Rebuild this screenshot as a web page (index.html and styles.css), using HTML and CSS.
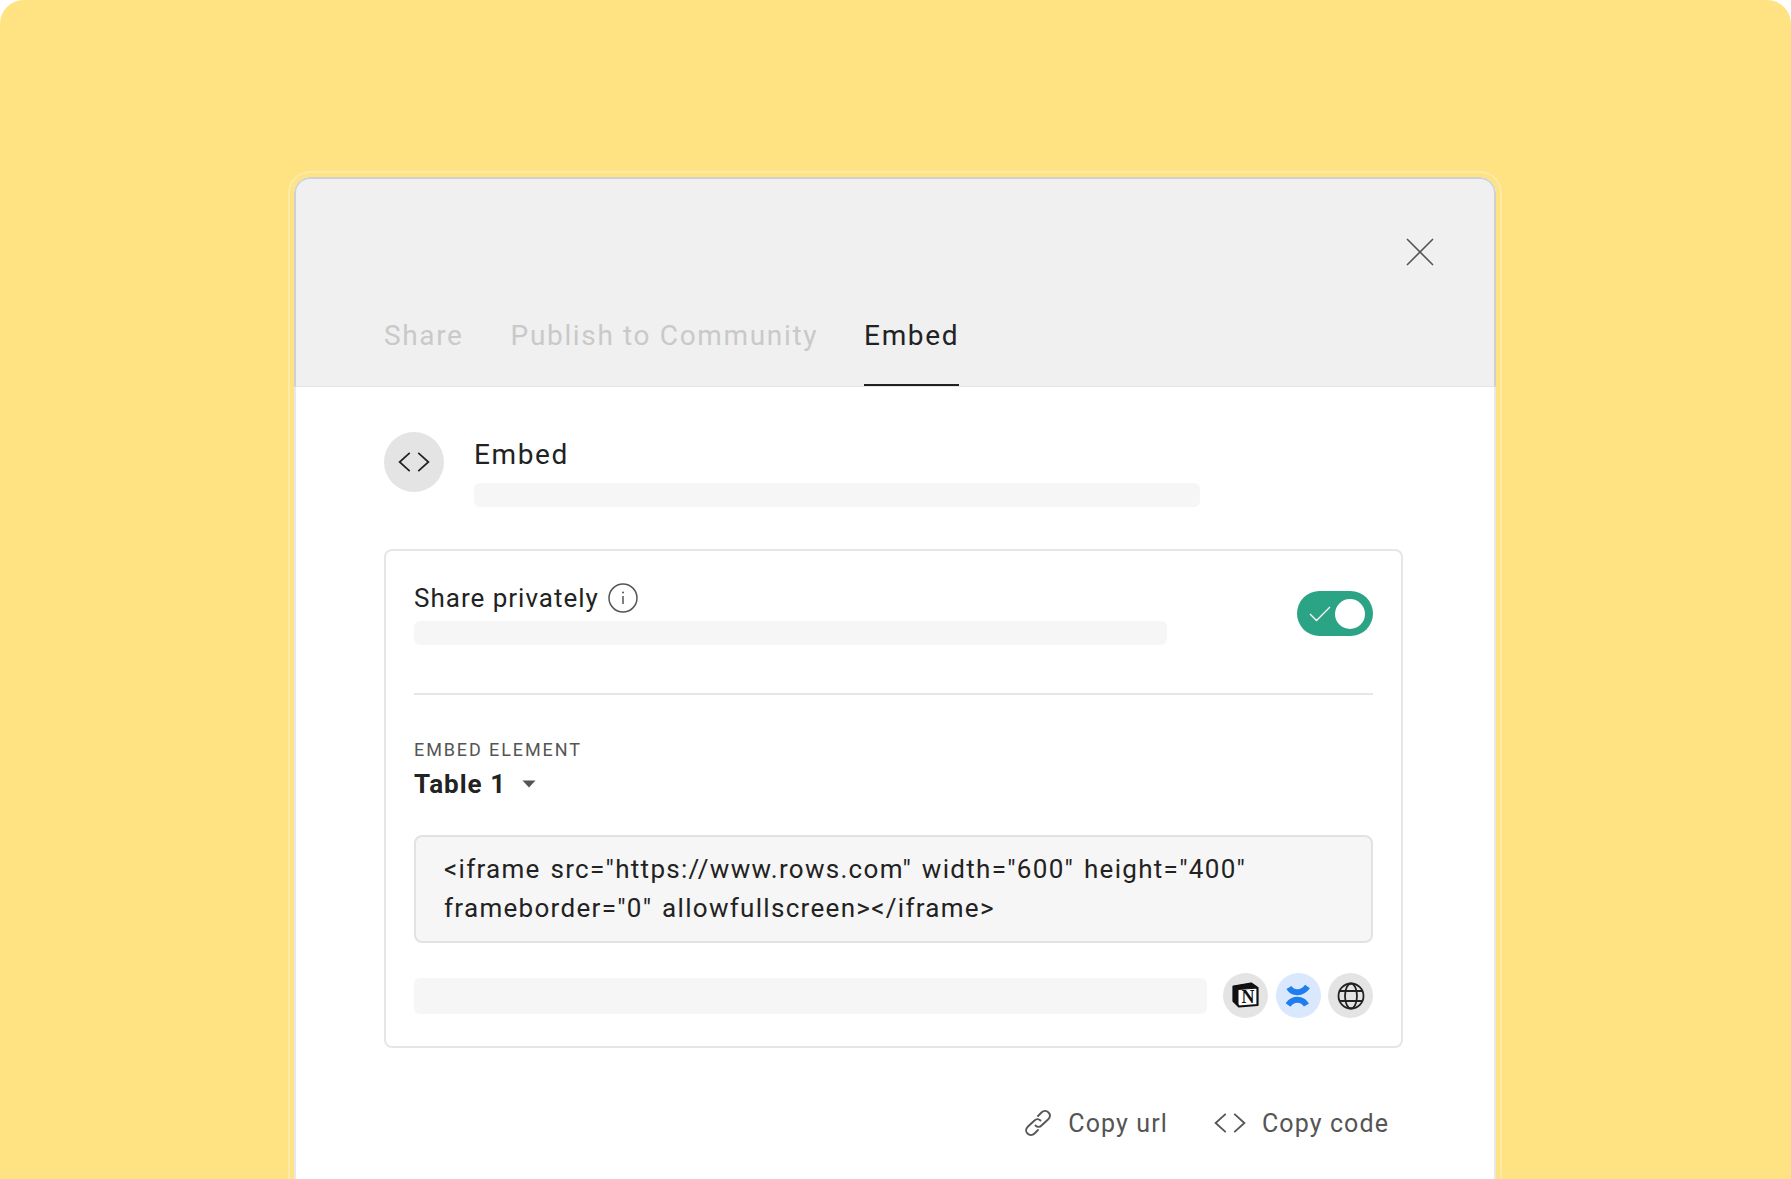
FILE: index.html
```html
<!DOCTYPE html>
<html lang="en">
<head>
<meta charset="utf-8">
<title>Embed</title>
<link rel="stylesheet" href="styles.css">
</head>
<body>
<main class="page">
  <section class="dialog">
    <header class="head">
      <button class="close" aria-label="Close">
        <svg width="28" height="28" viewBox="0 0 28 28"><path d="M1 1L27 27M27 1L1 27" fill="none" stroke="#555" stroke-width="1.6"/></svg>
      </button>
      <nav class="tabs">
        <span class="tab">Share</span>
        <span class="tab">Publish to Community</span>
        <span class="tab active">Embed</span>
      </nav>
    </header>
    <div class="body">
      <div class="intro">
        <span class="round">
          <svg width="32" height="22" viewBox="0 0 30 20"><path d="M11 1.5L1.5 10L11 18.500M19 1.500L28.500 10L19 18.500" fill="none" stroke="#222" stroke-width="1.600"/></svg>
        </span>
        <div class="intro-text">
          <h2 class="title">Embed</h2>
          <div class="ph ph-intro"></div>
        </div>
      </div>
      <div class="panel">
        <div class="private">
          <div class="private-text">
            <div class="label-row">
              <span class="label">Share privately</span>
              <svg class="info" width="30" height="30" viewBox="0 0 30 30"><circle cx="15" cy="15" r="14" fill="none" stroke="#555" stroke-width="1.500"/><path d="M15 13V21" stroke="#555" stroke-width="1.500"/><circle cx="15" cy="9.500" r="1" fill="#555"/></svg>
            </div>
            <div class="ph ph-private"></div>
          </div>
          <div class="toggle">
            <svg width="22" height="16" viewBox="0 0 22 16"><path d="M1 8L7.500 14.500L21 1" fill="none" stroke="#fff" stroke-width="1.300"/></svg>
            <span class="knob"></span>
          </div>
        </div>
        <div class="element">
          <div class="eyebrow">EMBED ELEMENT</div>
          <div class="select">
            <span class="select-name">Table 1</span>
            <svg width="14" height="8" viewBox="0 0 14 8"><path d="M0.500 0.500H13.500L7 7.500Z" fill="#555"/></svg>
          </div>
        </div>
        <div class="code">&lt;iframe src="https://www.rows.com" width="600" height="400" frameborder="0" allowfullscreen&gt;&lt;/iframe&gt;</div>
        <div class="targets">
          <div class="ph ph-target"></div>
          <span class="chip">
            <svg width="27" height="27" viewBox="0 0 27 27"><path d="M1.500 4.500L19 1.500L25.500 6V23L7 24.500L1.500 19Z" fill="#fff" stroke="#111" stroke-width="2.200" stroke-linejoin="round"/><path d="M1.500 4.500L6 7.500L25.500 6L19 1.500Z" fill="#111" stroke="#111" stroke-width="1.200" stroke-linejoin="round"/><path d="M1.500 4.500L6.500 8V24L1.500 19Z" fill="#111"/><text x="16" y="21" class="notion-n">N</text></svg>
          </span>
          <span class="chip chip-blue">
            <svg width="24" height="26" viewBox="0 0 24 26"><g fill="none" stroke="#1f7df0" stroke-width="6"><path d="M3 4.500C7 11 16 11 21.500 3.500"/><path d="M2 22C7 15 16 15 20.500 22"/></g></svg>
          </span>
          <span class="chip">
            <svg width="28" height="28" viewBox="0 0 28 28"><g fill="none" stroke="#222" stroke-width="1.800"><circle cx="14" cy="14" r="12.500"/><ellipse cx="14" cy="14" rx="6" ry="12.500"/><path d="M3 9H25M3 19H25"/></g></svg>
          </span>
        </div>
      </div>
      <div class="actions">
        <button class="action">
          <svg width="28" height="28" viewBox="0 0 28 28"><g fill="none" stroke="#555" stroke-width="1.800" stroke-linecap="round"><path d="M11.500 16.500C13.500 18.500 16 18 17.500 16.500L24 10.500C26.500 8 26.500 5.500 24.500 3.500C22.500 1.500 19.500 1.500 17.500 3.500L14 7"/><path d="M16.500 11.500C14.500 9.500 12 10 10.500 11.500L4 17.500C1.500 20 1.500 22.500 3.500 24.500C5.500 26.500 8.500 26.500 10.500 24.500L14 21"/></g></svg>
          <span>Copy url</span>
        </button>
        <button class="action">
          <svg width="32" height="22" viewBox="0 0 30 20"><path d="M11 1.500L1.500 10L11 18.500M19 1.500L28.500 10L19 18.500" fill="none" stroke="#555" stroke-width="1.700"/></svg>
          <span>Copy code</span>
        </button>
      </div>
    </div>
  </section>
</main>
</body>
</html>
```
FILE: styles.css
```css
* { box-sizing: border-box; }
html, body { margin: 0; height: 100%; background: #fff; overflow: hidden; }
body { font-family: "Roboto", "Inter", sans-serif; color: #222; }
.page { height: 1179px; background: #ffe281; border-radius: 24px 24px 0 0; padding: 177px 295px 0 294px; overflow: hidden; }
.dialog { height: 1100px; background: #fff; border-radius: 16px 16px 0 0; box-shadow: 0 0 0 4px #ffe281, 0 0 0 6px #fdeaa6; overflow: hidden; }
.head { height: 210px; background: #f0f0f0; border: 2px solid #d0d0d0; border-bottom: 1px solid #e4e4e4; border-radius: 16px 16px 0 0; padding: 0 60px 0 88px; display: flex; flex-direction: column; justify-content: space-between; }
.close { align-self: flex-end; margin: 59px 0 0; padding: 0; border: 0; background: none; height: 28px; width: 28px; display: block; }
.tabs { display: flex; gap: 47px; height: 75px; }
.tab { font-size: 28px; line-height: 50px; letter-spacing: 1.650px; color: #c9c9c9; height: 75px; white-space: nowrap; }
.tab.active { color: #222; border-bottom: 2px solid #222; margin-left: -1px; }
.body { padding: 45px 93px 0 88px; border-left: 2px solid #e8e8e8; border-right: 2px solid #e8e8e8; height: 890px; }
.intro { display: flex; gap: 30px; }
.round { width: 60px; height: 60px; border-radius: 50%; background: #e5e4e5; display: flex; align-items: center; justify-content: center; flex: none; }
.title { margin: 1px 0 0; font-size: 28px; font-weight: 400; line-height: 44px; letter-spacing: 1.600px; }
.intro-text { flex: 1; }
.ph { background: #f6f6f6; border-radius: 6px; }
.ph-intro { width: 726px; height: 24px; margin-top: 6px; }
.panel { margin-top: 42px; width: 1019px; height: 499px; border: 2px solid #e6e6e6; border-radius: 8px; padding: 28px 28px 0; }
.private { display: flex; justify-content: space-between; height: 116px; border-bottom: 2px solid #e6e6e6; }
.label-row { display: flex; align-items: center; gap: 9px; height: 38px; margin-bottom: 4px; }
.label { font-size: 26px; letter-spacing: 1px; }
.ph-private { width: 753px; height: 24px; }
.toggle { width: 76px; height: 45px; margin-top: 12px; border-radius: 23px; background: #2ba385; display: flex; align-items: center; justify-content: space-between; padding: 0 8px 0 12px; }
.knob { width: 30px; height: 30px; border-radius: 50%; background: #fff; }
.element { padding-top: 42px; }
.eyebrow { font-size: 18px; line-height: 26px; letter-spacing: 1.900px; color: #555; }
.select { display: flex; align-items: center; gap: 16px; height: 42px; }
.select-name { font-size: 26px; font-weight: 700; letter-spacing: 1px; }
.code { margin-top: 30px; height: 108px; padding: 13px 28px; background: #f6f6f6; border: 2px solid #e2e2e2; border-radius: 8px; font-size: 26px; line-height: 39px; letter-spacing: 1.300px; word-spacing: 2px; }
.targets { display: flex; align-items: center; margin-top: 30px; }
.ph-target { flex: 1; height: 36px; margin-right: 16px; }
.chip { width: 45px; height: 45px; border-radius: 50%; background: #e5e4e5; display: flex; align-items: center; justify-content: center; margin-left: 7.500px; flex: none; }
.chip:first-of-type { margin-left: 0; }
.chip-blue { background: #d9e8fd; }
.notion-n { font-family: "Liberation Serif", serif; font-size: 18px; font-weight: 700; text-anchor: middle; fill: #111; }
.actions { display: flex; justify-content: flex-end; gap: 46px; margin-top: 55px; width: 1019px; padding-right: 14px; }
.action { display: flex; align-items: center; gap: 16px; padding: 0; border: 0; background: none; font: inherit; font-size: 25px; letter-spacing: 1.100px; color: #555; height: 40px; }
```
